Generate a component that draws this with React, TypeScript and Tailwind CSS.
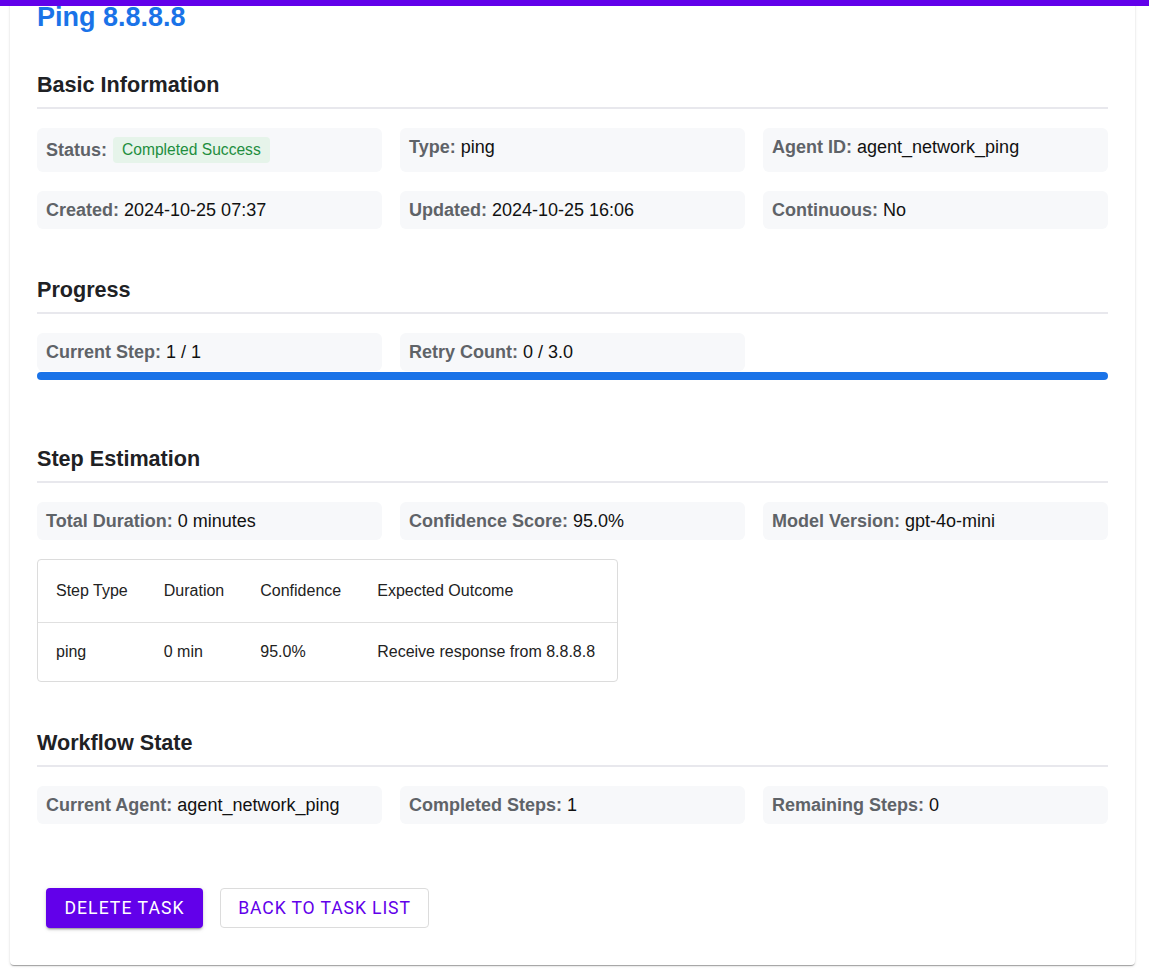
import React from 'react';

type Field = { label: string; value: React.ReactNode; chip?: boolean };

const InfoCell: React.FC<Field> = ({ label, value, chip }) => (
  <div
    className={`bg-[#f7f8fa] rounded-[6px] p-[9px] text-[18px] leading-[20px] ${chip ? 'flex items-center' : ''}`}
  >
    <strong className="font-bold text-[#5f6368]">{label}</strong>
    {chip ? (
      <span className="ml-[6px] bg-[#e6f4ea] text-[#1e8e3e] text-[15.6px] leading-[18px] py-[4px] px-[9px] rounded-[4px]">
        {value}
      </span>
    ) : (
      <span className="text-[#111]"> {value}</span>
    )}
  </div>
);

const SectionTitle: React.FC<{ children: React.ReactNode }> = ({ children }) => (
  <h2 className="text-[21.6px] leading-[26px] font-bold text-[#202124] pb-[9px] border-b-2 border-[#e8e8ed] mb-[19px]">
    {children}
  </h2>
);

const Grid: React.FC<{ items: Field[] }> = ({ items }) => (
  <div className="grid grid-cols-3 gap-x-[18px] gap-y-[19px]">
    {items.map((f) => (
      <InfoCell key={f.label} {...f} />
    ))}
  </div>
);

export default function App() {
  const basic: Field[] = [
    { label: 'Status:', value: 'Completed Success', chip: true },
    { label: 'Type:', value: 'ping' },
    { label: 'Agent ID:', value: 'agent_network_ping' },
    { label: 'Created:', value: '2024-10-25 07:37' },
    { label: 'Updated:', value: '2024-10-25 16:06' },
    { label: 'Continuous:', value: 'No' },
  ];

  const estimation: Field[] = [
    { label: 'Total Duration:', value: '0 minutes' },
    { label: 'Confidence Score:', value: '95.0%' },
    { label: 'Model Version:', value: 'gpt-4o-mini' },
  ];

  const workflow: Field[] = [
    { label: 'Current Agent:', value: 'agent_network_ping' },
    { label: 'Completed Steps:', value: '1' },
    { label: 'Remaining Steps:', value: '0' },
  ];

  const steps = [
    { type: 'ping', duration: '0 min', confidence: '95.0%', outcome: 'Receive response from 8.8.8.8' },
  ];

  return (
    <div className="min-h-screen bg-white font-['Liberation_Sans',Arial,sans-serif] overflow-hidden">
      <div className="fixed top-0 left-0 right-0 h-[6px] bg-[#6200ea] z-10" />

      <div className="ml-[10px] mr-[14px] -mt-[20px] pt-[21px] px-[27px] pb-[37px] bg-white rounded-[4px] shadow-[0_2px_1px_-1px_rgba(0,0,0,0.2),0_1px_1px_0_rgba(0,0,0,0.14),0_1px_3px_0_rgba(0,0,0,0.12)]">
        <h1 className="text-[27px] leading-[32px] font-bold text-[#1a73e8] mb-[39px]">Ping 8.8.8.8</h1>

        <section>
          <SectionTitle>Basic Information</SectionTitle>
          <Grid items={basic} />
        </section>

        <section className="mt-[48px]">
          <SectionTitle>Progress</SectionTitle>
          <Grid
            items={[
              { label: 'Current Step:', value: '1 / 1' },
              { label: 'Retry Count:', value: '0 / 3.0' },
            ]}
          />
          <div className="mt-[1px] h-[8px] rounded-full bg-[#1a73e8]" />
        </section>

        <section className="mt-[66px]">
          <SectionTitle>Step Estimation</SectionTitle>
          <Grid items={estimation} />
          <div className="mt-[19px] w-fit border border-[#dcdcdc] rounded-[4px] overflow-hidden">
            <table className="border-collapse text-[16px] text-[#222]">
              <thead>
                <tr className="h-[62px] border-b border-[#e0e0e0]">
                  <th className="px-[18px] font-normal text-left">Step Type</th>
                  <th className="px-[18px] font-normal text-left">Duration</th>
                  <th className="px-[18px] font-normal text-left">Confidence</th>
                  <th className="pl-[18px] pr-[22px] font-normal text-left">Expected Outcome</th>
                </tr>
              </thead>
              <tbody>
                {steps.map((s) => (
                  <tr key={s.type} className="h-[59px]">
                    <td className="px-[18px]">{s.type}</td>
                    <td className="px-[18px]">{s.duration}</td>
                    <td className="px-[18px]">{s.confidence}</td>
                    <td className="pl-[18px] pr-[22px]">{s.outcome}</td>
                  </tr>
                ))}
              </tbody>
            </table>
          </div>
        </section>

        <section className="mt-[48px]">
          <SectionTitle>Workflow State</SectionTitle>
          <Grid items={workflow} />
        </section>

        <div className="mt-[64px] ml-[9px] flex gap-[17px] font-['Roboto',Arial,sans-serif]">
          <button className="h-[40px] w-[157px] rounded-[4px] bg-[#6200ea] text-white text-[17.6px] font-normal tracking-[0.06em] uppercase shadow-[0_3px_1px_-2px_rgba(0,0,0,0.2),0_2px_2px_0_rgba(0,0,0,0.14),0_1px_5px_0_rgba(0,0,0,0.12)]">
            Delete Task
          </button>
          <button className="h-[40px] w-[209px] rounded-[4px] border border-[#dcdcdc] bg-white text-[#6200ea] text-[17.6px] font-normal tracking-[0.05em] uppercase">
            Back to Task List
          </button>
        </div>
      </div>
    </div>
  );
}
